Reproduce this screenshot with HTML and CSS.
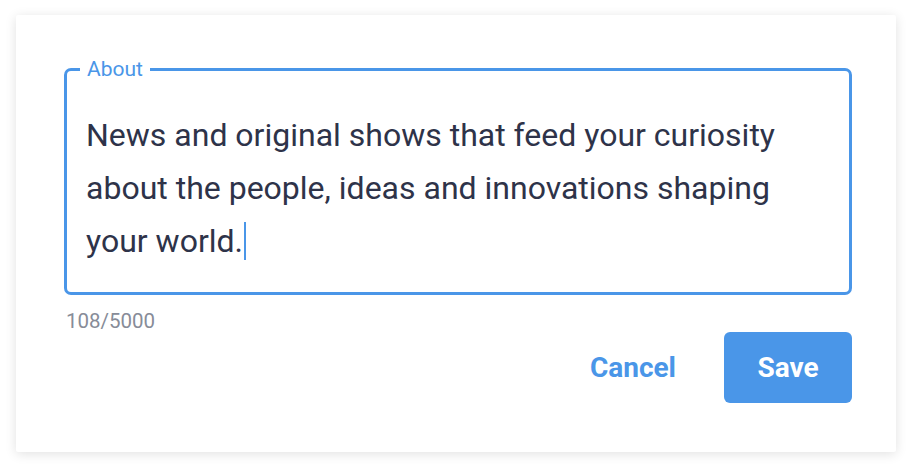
FILE: index.html
```html
<!DOCTYPE html>
<html>
<head>
<meta charset="utf-8">
<link rel="stylesheet" href="styles.css">
</head>
<body>
<div class="card">
  <fieldset class="field">
    <legend class="label">About</legend>
    <div class="text">News and original shows that feed your curiosity about the people, ideas and innovations shaping your world.<span class="caret"></span></div>
  </fieldset>
  <div class="counter">108/5000</div>
  <div class="actions">
    <button class="btn cancel">Cancel</button>
    <button class="btn save">Save</button>
  </div>
</div>
</body>
</html>
```
FILE: styles.css
```css
html, body { margin: 0; padding: 0; background: #fff; }
body { font-family: Roboto, "Noto Sans", sans-serif; width: 912px; height: 470px; overflow: hidden; }
.card {
  margin: 15px 0 0 16px;
  width: 880px;
  height: 437px;
  box-sizing: border-box;
  background: #fff;
  border-radius: 2px;
  box-shadow: 0 2px 12px rgba(0,0,0,0.12);
  padding: 44px 44px 0 48px;
}
.field {
  margin: 0;
  border: 3px solid #4a96e8;
  border-radius: 7px;
  padding: 30px 20px 0 19px;
  height: 236px;
  box-sizing: border-box;
}
.label {
  color: #4a96e8;
  font-size: 21px;
  padding: 0 7px;
  margin-left: -6px;
  line-height: 20px;
}
.text {
  font-size: 32px;
  line-height: 53px;
  color: #2e3349;
}
.caret {
  display: inline-block;
  width: 2px;
  height: 38px;
  background: #4a96e8;
  vertical-align: -8px;
  margin-left: 1px;
}
.counter {
  margin-top: 14px;
  margin-left: 2px;
  font-size: 20.5px;
  color: #878c98;
}
.actions {
  display: flex;
  justify-content: flex-end;
  align-items: center;
  gap: 48px;
  margin-top: -1px;
}
.btn {
  font-family: Roboto, sans-serif;
  font-weight: 700;
  font-size: 28px;
  border: none;
  background: none;
  cursor: pointer;
}
.cancel { color: #4a96e8; padding: 0; }
.save {
  background: #4a96e8;
  color: #fff;
  width: 128px;
  height: 71px;
  border-radius: 6px;
}
```
